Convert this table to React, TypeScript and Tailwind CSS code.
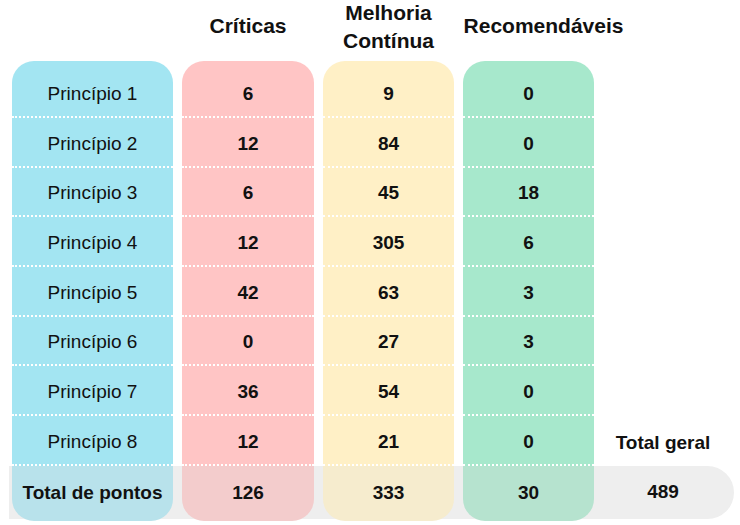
import React from "react";

const rows = [
  { name: "Princípio 1", c: 6, m: 9, r: 0 },
  { name: "Princípio 2", c: 12, m: 84, r: 0 },
  { name: "Princípio 3", c: 6, m: 45, r: 18 },
  { name: "Princípio 4", c: 12, m: 305, r: 6 },
  { name: "Princípio 5", c: 42, m: 63, r: 3 },
  { name: "Princípio 6", c: 0, m: 27, r: 3 },
  { name: "Princípio 7", c: 36, m: 54, r: 0 },
  { name: "Princípio 8", c: 12, m: 21, r: 0 },
];

const grid = "grid grid-cols-[161px_132px_131px_131px_120px] gap-x-[9px]";

export default function App() {
  return (
    <div
      className="w-[740px] h-[525px] bg-white text-[#111] overflow-hidden"
      style={{ fontFamily: '"Liberation Sans", Arial, sans-serif' }}
    >
      <div className="pl-[12px]">
        {/* header */}
        <div className={`${grid} h-[61px] text-[21px] font-bold leading-[28px]`}>
          <div />
          <div className="flex items-center justify-center pb-[9px]">Críticas</div>
          <div className="flex flex-col items-center justify-start -mt-[1px]">
            <span>Melhoria</span>
            <span>Contínua</span>
          </div>
          <div className="flex items-center justify-center pb-[9px] pl-[30px] whitespace-nowrap">Recomendáveis</div>
          <div />
        </div>

        {/* body */}
        <div className={`${grid} text-[19px]`}>
          {rows.map((row, i) => {
            const first = i === 0;
            const h = first ? "h-[57px] pt-[12px] rounded-t-[22px]" : "h-[49.7px] pt-[4px]";
            const cell = `flex items-center justify-center border-b-2 border-dotted border-white ${h}`;
            return (
              <React.Fragment key={row.name}>
                <div className={`${cell} bg-[#a3e5f2]`}>{row.name}</div>
                <div className={`${cell} bg-[#ffc5c5] font-bold`}>{row.c}</div>
                <div className={`${cell} bg-[#fff0c6] font-bold`}>{row.m}</div>
                <div className={`${cell} bg-[#a7e8cc] font-bold`}>{row.r}</div>
                <div className={`flex items-end justify-center pb-[8px] font-bold whitespace-nowrap ${first ? "h-[57px]" : "h-[49.7px]"}`}>
                  {i === 7 ? "Total geral" : ""}
                </div>
              </React.Fragment>
            );
          })}
        </div>

        {/* total row */}
        <div className="-ml-[3px] pl-[3px] w-[725px] h-[53px] bg-[#eeeeee] rounded-r-[27px]">
          <div className={`${grid} text-[19px] font-bold`}>
            <div className="h-[55px] flex items-center justify-center bg-[#b8e2eb] rounded-b-[22px]">Total de pontos</div>
            <div className="h-[55px] flex items-center justify-center bg-[#f3cccc] rounded-b-[22px]">126</div>
            <div className="h-[55px] flex items-center justify-center bg-[#f6ecce] rounded-b-[22px]">333</div>
            <div className="h-[55px] flex items-center justify-center bg-[#b6e3cf] rounded-b-[22px]">30</div>
            <div className="h-[53px] flex items-center justify-center">489</div>
          </div>
        </div>
      </div>
    </div>
  );
}
